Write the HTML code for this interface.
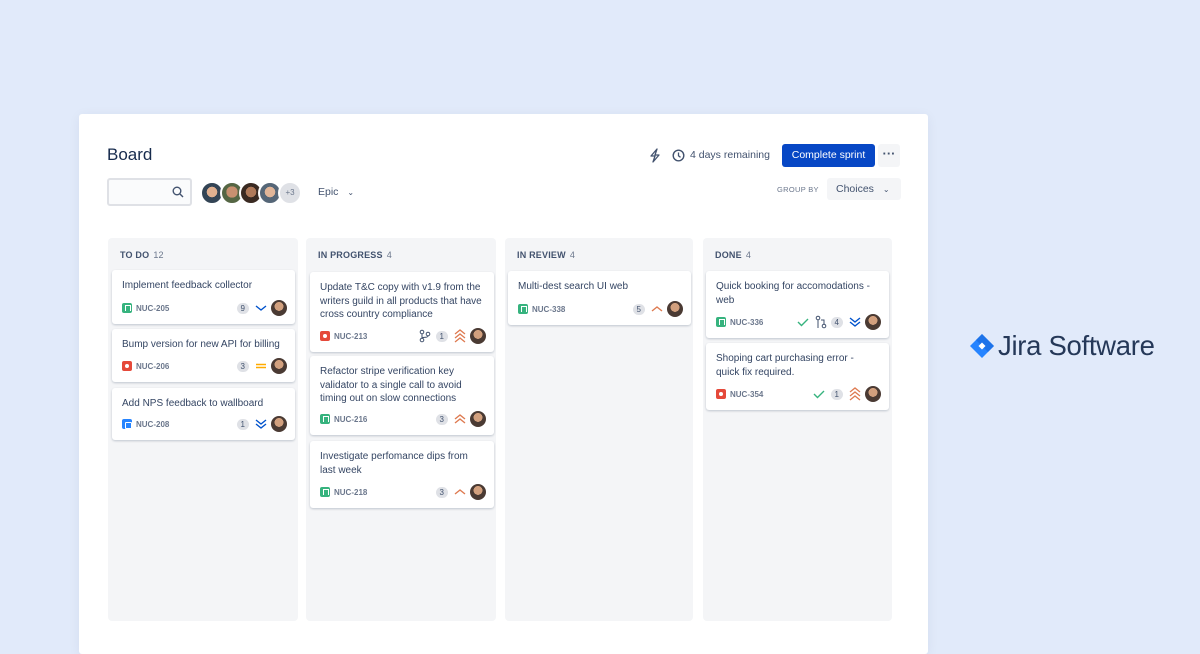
<!DOCTYPE html>
<html><head><style>
*{margin:0;padding:0;box-sizing:border-box}
html,body{width:1200px;height:641px}
body{background:#e1eafa;font-family:"Liberation Sans",sans-serif;position:relative;overflow:hidden;color:#172b4d}
.panel{position:absolute;left:79px;top:114px;width:849px;height:540px;background:#fff;border-radius:3px;box-shadow:0 2px 12px rgba(9,30,66,.06)}
.abs{position:absolute}
.col{position:absolute;top:238px;height:383px;background:#f4f5f7;border-radius:4px}
.colh{position:absolute;left:12px;top:12px;font-size:9px;font-weight:bold;color:#42526e;letter-spacing:.2px}
.colh span{font-weight:normal;margin-left:4px;color:#6b778c}
.card{position:absolute;background:#fff;border-radius:3px;box-shadow:0 1px 2px rgba(9,30,66,.22)}
.t{position:absolute;left:10px;top:9px;right:10px;font-size:10px;line-height:13.5px;color:#344563}
.ft{position:absolute;left:10px;bottom:8px;right:8px;height:16px;display:flex;align-items:center}
.key{font-size:8px;font-weight:bold;color:#6b778c;margin-left:4px;flex:1}
.ico{width:10px;height:10px;border-radius:2px;position:relative}
.story{background:#36b37e}
.story::after{content:"";position:absolute;left:3px;top:2px;width:4px;height:5px;border:1px solid #fff;border-bottom:none}
.bug{background:#e5493a}
.bug::after{content:"";position:absolute;left:3px;top:3px;width:4px;height:4px;border-radius:50%;background:#fff}
.task{background:#2684ff}
.task::after{content:"";position:absolute;left:2.5px;top:2.5px;width:5px;height:5px;border:1px solid #fff;border-radius:1px}
.n{font-size:8px;color:#42526e;background:#dfe1e6;border-radius:7px;padding:1px 4px;margin-right:6px}
.av{width:16px;height:16px;border-radius:50%;background:radial-gradient(circle at 50% 40%,#d2a07e 0 35%,#4a3a33 36%);margin-left:4px}
svg{display:block}
</style></head><body>
<div class="panel"></div>
<div class="abs" style="left:107px;top:145px;font-size:17px;color:#172b4d">Board</div>
<div class="abs" style="left:107px;top:178px;width:85px;height:28px;border:2px solid #dfe1e6;border-radius:3px;background:#fafbfc"></div>
<svg class="abs" style="left:172px;top:186px" width="12" height="12"><circle cx="5" cy="5" r="3.8" fill="none" stroke="#42526e" stroke-width="1.4"/><path d="M8 8l3 3" stroke="#42526e" stroke-width="1.4"/></svg>
<div class="abs" style="left:200px;top:181px;width:24px;height:24px;border-radius:50%;border:2px solid #fff;background:radial-gradient(circle at 50% 45%,#e0b090 0 35%,#345 36%)"></div>
<div class="abs" style="left:220px;top:181px;width:24px;height:24px;border-radius:50%;border:2px solid #fff;background:radial-gradient(circle at 50% 45%,#c89070 0 38%,#564 39%)"></div>
<div class="abs" style="left:239px;top:181px;width:24px;height:24px;border-radius:50%;border:2px solid #fff;background:radial-gradient(circle at 50% 45%,#b07a5a 0 35%,#3a2a22 36%)"></div>
<div class="abs" style="left:258px;top:181px;width:24px;height:24px;border-radius:50%;border:2px solid #fff;background:radial-gradient(circle at 50% 45%,#e0b598 0 35%,#567 36%)"></div>
<div class="abs" style="left:278px;top:181px;width:24px;height:24px;border-radius:50%;border:2px solid #fff;background:#dfe1e6;font-size:8px;color:#6b778c;text-align:center;line-height:20px">+3</div>
<div class="abs" style="left:318px;top:186px;font-size:10.5px;color:#42526e">Epic <span style="font-size:8px;margin-left:6px">&#8964;</span></div>
<svg class="abs" style="left:648px;top:148px" width="14" height="15"><path d="M9 1L3 8h4l-2 6 6-7H7z" fill="none" stroke="#42526e" stroke-width="1.3" stroke-linejoin="round"/></svg>
<svg class="abs" style="left:672px;top:149px" width="13" height="13"><circle cx="6.5" cy="6.5" r="5.3" fill="none" stroke="#42526e" stroke-width="1.4"/><path d="M6.5 3.5v3.3l2 1.5" fill="none" stroke="#42526e" stroke-width="1.3"/></svg>
<div class="abs" style="left:690px;top:149px;font-size:10.5px;color:#42526e">4 days remaining</div>
<div class="abs" style="left:782px;top:144px;width:93px;height:23px;background:#0747c5;border-radius:3px;color:#fff;font-size:10.5px;text-align:center;line-height:23px">Complete sprint</div>
<div class="abs" style="left:878px;top:144px;width:22px;height:23px;background:#f4f5f7;border-radius:3px;color:#42526e;font-size:13px;text-align:center;line-height:20px;font-weight:bold">···</div>
<div class="abs" style="left:777px;top:185px;font-size:7.5px;color:#6b778c;letter-spacing:.3px">GROUP BY</div>
<div class="abs" style="left:827px;top:178px;width:74px;height:22px;background:#f4f5f7;border-radius:3px;font-size:10.5px;color:#42526e;line-height:22px;padding-left:9px">Choices <span style="font-size:8px;margin-left:6px">&#8964;</span></div>

<div class="col" style="left:108px;width:190px"><div class="colh">TO DO<span>12</span></div></div>
<div class="col" style="left:306px;width:190px"><div class="colh">IN PROGRESS<span>4</span></div></div>
<div class="col" style="left:505px;width:188px"><div class="colh">IN REVIEW<span>4</span></div></div>
<div class="col" style="left:703px;width:189px"><div class="colh">DONE<span>4</span></div></div>

<div class="card" style="left:112px;top:270px;width:183px;height:54px"><div class="t">Implement feedback collector</div>
<div class="ft"><div class="ico story"></div><div class="key">NUC-205</div><span class="n">9</span><svg width="12" height="8"><path d="M1 2l5 4 5-4" fill="none" stroke="#0052cc" stroke-width="1.4"/></svg><div class="av"></div></div></div>
<div class="card" style="left:112px;top:329px;width:183px;height:53px"><div class="t">Bump version for new API for billing</div>
<div class="ft"><div class="ico bug"></div><div class="key">NUC-206</div><span class="n">3</span><svg width="12" height="8"><path d="M1 2.5h10M1 5.5h10" stroke="#ffab00" stroke-width="1.4"/></svg><div class="av"></div></div></div>
<div class="card" style="left:112px;top:388px;width:183px;height:52px"><div class="t">Add NPS feedback to wallboard</div>
<div class="ft"><div class="ico task"></div><div class="key">NUC-208</div><span class="n">1</span><svg width="12" height="10"><path d="M1 1l5 4 5-4M1 5l5 4 5-4" fill="none" stroke="#0052cc" stroke-width="1.4"/></svg><div class="av"></div></div></div>

<div class="card" style="left:310px;top:272px;width:184px;height:80px"><div class="t">Update T&amp;C copy with v1.9 from the writers guild in all products that have cross country compliance</div>
<div class="ft"><div class="ico bug"></div><div class="key">NUC-213</div><svg width="12" height="14" style="margin-right:5px"><circle cx="3" cy="3" r="1.8" fill="none" stroke="#42526e"/><circle cx="3" cy="11" r="1.8" fill="none" stroke="#42526e"/><circle cx="9" cy="5" r="1.8" fill="none" stroke="#42526e"/><path d="M3 5v4M9 7c0 2-6 1-6 2" fill="none" stroke="#42526e"/></svg><span class="n">1</span><svg width="12" height="14"><path d="M1 5l5-4 5 4M1 9l5-4 5 4M1 13l5-4 5 4" fill="none" stroke="#de7a50" stroke-width="1.3"/></svg><div class="av"></div></div></div>
<div class="card" style="left:310px;top:356px;width:184px;height:79px"><div class="t">Refactor stripe verification key validator to a single call to avoid timing out on slow connections</div>
<div class="ft"><div class="ico story"></div><div class="key">NUC-216</div><span class="n">3</span><svg width="12" height="10"><path d="M1 5l5-4 5 4M1 9l5-4 5 4" fill="none" stroke="#de7a50" stroke-width="1.4"/></svg><div class="av"></div></div></div>
<div class="card" style="left:310px;top:441px;width:184px;height:67px"><div class="t">Investigate perfomance dips from last week</div>
<div class="ft"><div class="ico story"></div><div class="key">NUC-218</div><span class="n">3</span><svg width="12" height="8"><path d="M1 6l5-4 5 4" fill="none" stroke="#de7a50" stroke-width="1.4"/></svg><div class="av"></div></div></div>

<div class="card" style="left:508px;top:271px;width:183px;height:54px"><div class="t">Multi-dest search UI web</div>
<div class="ft"><div class="ico story"></div><div class="key">NUC-338</div><span class="n">5</span><svg width="12" height="8"><path d="M1 6l5-4 5 4" fill="none" stroke="#de7a50" stroke-width="1.4"/></svg><div class="av"></div></div></div>

<div class="card" style="left:706px;top:271px;width:183px;height:67px"><div class="t">Quick booking for accomodations - web</div>
<div class="ft"><div class="ico story"></div><div class="key">NUC-336</div><svg width="12" height="10" style="margin-right:6px"><path d="M1 5l3.5 3.5L11 2" fill="none" stroke="#36b37e" stroke-width="1.4"/></svg><svg width="12" height="14" style="margin-right:4px"><circle cx="3" cy="3" r="1.8" fill="none" stroke="#42526e"/><circle cx="9" cy="11" r="1.8" fill="none" stroke="#42526e"/><path d="M3 5v8M9 9V5H6" fill="none" stroke="#42526e"/></svg><span class="n">4</span><svg width="12" height="10"><path d="M1 1l5 4 5-4M1 5l5 4 5-4" fill="none" stroke="#0052cc" stroke-width="1.4"/></svg><div class="av"></div></div></div>
<div class="card" style="left:706px;top:343px;width:183px;height:67px"><div class="t">Shoping cart purchasing error - quick fix required.</div>
<div class="ft"><div class="ico bug"></div><div class="key">NUC-354</div><svg width="12" height="10" style="margin-right:6px"><path d="M1 5l3.5 3.5L11 2" fill="none" stroke="#36b37e" stroke-width="1.4"/></svg><span class="n">1</span><svg width="12" height="14"><path d="M1 5l5-4 5 4M1 9l5-4 5 4M1 13l5-4 5 4" fill="none" stroke="#de7a50" stroke-width="1.3"/></svg><div class="av"></div></div></div>

<svg class="abs" style="left:969px;top:333px" width="26" height="26"><path d="M13 1L25 13 13 25 1 13z" fill="#2684ff"/><path d="M13 1L25 13 19 19 13 13 7 7z" fill="#1868db" opacity=".6"/><path d="M13 9.5l3.5 3.5-3.5 3.5-3.5-3.5z" fill="#fff"/></svg>
<div class="abs" style="left:998px;top:330px;font-size:27.5px;color:#253858;letter-spacing:-.3px">Jira Software</div>
</body></html>
